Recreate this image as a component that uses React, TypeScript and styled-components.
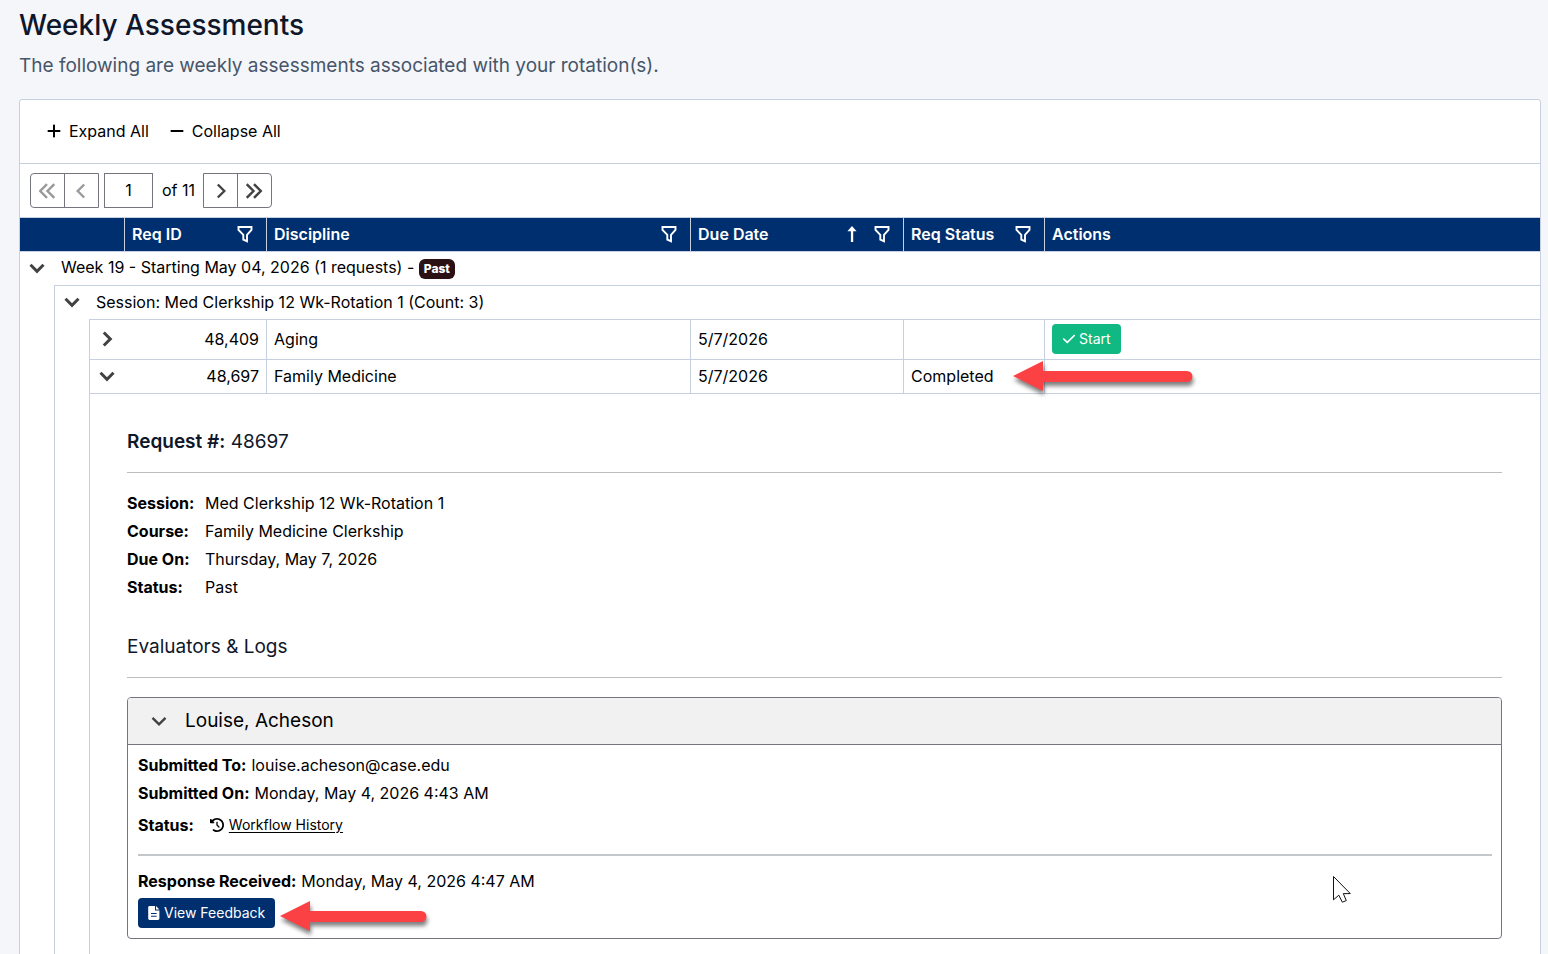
import React from 'react';
import styled, { createGlobalStyle, css } from 'styled-components';
import { FaCheck, FaClockRotateLeft, FaPlus, FaMinus } from 'react-icons/fa6';

const Global = createGlobalStyle`
  *, *::before, *::after { box-sizing: border-box; }
  html { scrollbar-width: none; }
  body {
    margin: 0;
    background: #f4f6fa;
    color: #000;
    font: 400 16px/24px Inter, "Liberation Sans", sans-serif;
  }
  button, input { font: inherit; color: inherit; }
`;

const ink = '#424242';
const line = '#c7d0de';

const Page = styled.main`
  position: relative;
  min-height: 100vh;
  padding: 8px 7px 16px 19px;
  overflow: hidden;
`;
const Title = styled.h1`
  margin: 0;
  font-size: 28px;
  line-height: 34px;
  font-weight: 500;
  color: #0f172a;
`;
const Subtitle = styled.p`
  margin: 10px 0 20px;
  font-size: 19px;
  line-height: 27px;
  color: #475569;
`;
const Panel = styled.section`
  background: #fff;
  border: 1px solid ${line};
  border-radius: 3px;
`;
const Toolbar = styled.div`
  display: flex;
  align-items: center;
  gap: 20px;
  height: 64px;
  padding: 0 26px 2px;
  border-bottom: 1px solid ${line};
`;
const PlainButton = styled.button`
  display: inline-flex;
  align-items: center;
  gap: 7px;
  padding: 0;
  border: 0;
  background: none;
  cursor: pointer;
`;
const Pager = styled.nav`
  display: flex;
  align-items: center;
  height: 54px;
  padding: 0 10px;
  border-bottom: 1px solid ${line};
`;
const PagerGroup = styled.div<{ $side: 'left' | 'right' }>`
  display: flex;
  border: 1px solid #75757f;
  border-radius: ${p => (p.$side === 'left' ? '4px 0 0 4px' : '0 4px 4px 0')};
`;
const PagerButton = styled.button`
  display: grid;
  place-items: center;
  width: 33px;
  height: 33px;
  padding: 0;
  border: 0;
  background: none;
  color: ${ink};
  & + & { width: 34px; border-left: 1px solid #75757f; }
  &:disabled { color: #9a9a9a; }
`;
const PageInput = styled.input`
  width: 49px;
  height: 35px;
  margin: 0 9px 0 5px;
  padding: 0 0 2px;
  border: 1px solid #75757f;
  border-radius: 0;
  background: #fff;
  text-align: center;
`;
const PageCount = styled.span`
  margin-right: 8px;
  padding-bottom: 2px;
`;

const Grid = styled.table`
  width: 100%;
  table-layout: fixed;
  border-collapse: separate;
  border-spacing: 0;
`;
const HeadCell = styled.th`
  height: 34px;
  padding: 0 13px 2px 7px;
  background: #002f6f;
  color: #fff;
  font-weight: 600;
  text-align: left;
  border-bottom: 1px solid ${line};
  & + & { border-left: 1px solid ${line}; }
`;
const HeadInner = styled.div`
  display: flex;
  align-items: center;
  gap: 17px;
`;
const HeadLabel = styled.span`
  flex: 1;
`;
const IconButton = styled.button`
  display: grid;
  place-items: center;
  padding: 0;
  border: 0;
  background: none;
  color: inherit;
  cursor: pointer;
`;
const DarkIconButton = styled(IconButton)`
  color: ${ink};
`;
const Cell = styled.td<{ $h?: number; $left?: boolean; $top?: boolean; $right?: boolean }>`
  position: relative;
  height: ${p => p.$h ?? 34}px;
  padding: 0 7px 2px;
  text-align: ${p => (p.$right ? 'right' : 'left')};
  ${p => p.$left && css`border-left: 1px solid ${line};`}
  ${p => p.$top && css`border-top: 1px solid ${line};`}
`;
const WeekCell = styled(Cell)`
  padding-bottom: 4px;
`;
const ToggleCell = styled(Cell)`
  padding: 0 0 2px 9px;
`;
const Badge = styled.span`
  display: inline-block;
  padding: 0 5px;
  border-radius: 6px;
  background: #2b1113;
  color: #fff;
  font-size: 12px;
  line-height: 20px;
  font-weight: 800;
`;
const ActionButton = styled.button<{ $tone: 'go' | 'primary' }>`
  display: inline-flex;
  align-items: center;
  gap: 3px;
  height: 30px;
  padding: 0 10px;
  border: 0;
  border-radius: 4px;
  background: ${p => (p.$tone === 'go' ? '#10b981' : '#002f6f')};
  color: #fff;
  font-size: 14px;
  line-height: 20px;
  vertical-align: middle;
  cursor: pointer;
`;
const DetailCell = styled.td`
  padding: 33px 38px 38px 37px;
  border-left: 1px solid ${line};
  border-top: 1px solid ${line};
`;
const Heading = styled.h2`
  margin: 0;
  padding-bottom: 15px;
  border-bottom: 1px solid #bdbdbd;
  font-size: 19px;
  line-height: 30px;
  font-weight: 400;
  color: #0f172a;
  b { font-weight: 600; }
`;
const Facts = styled.dl`
  display: grid;
  grid-template-columns: 78px 1fr;
  grid-auto-rows: 28px;
  align-items: center;
  margin: 16px 0 31px;
  dt { font-weight: 700; }
  dd { margin: 0; }
`;
const Card = styled.article`
  margin-top: 19px;
  border: 1px solid #75757f;
  border-radius: 4px;
  overflow: hidden;
`;
const CardHead = styled.header`
  display: flex;
  align-items: center;
  gap: 18px;
  height: 47px;
  padding: 0 23px;
  background: #f1f1f1;
  border-bottom: 1px solid #75757f;
  font-size: 19px;
`;
const CardBody = styled.div`
  padding: 6px 9px 10px 10px;
`;
const InfoLine = styled.div<{ $tall?: boolean }>`
  display: flex;
  align-items: center;
  height: ${p => (p.$tall ? 36 : 28)}px;
  b { margin-right: 5px; font-weight: 700; }
`;
const HistoryLink = styled.a`
  display: inline-flex;
  align-items: center;
  gap: 5px;
  margin-left: 11px;
  color: #000;
  font-size: 14px;
  text-decoration: none;
  span { text-decoration: underline; text-underline-offset: 2px; }
`;
const Rule = styled.hr`
  margin: 11px 0;
  border: 0;
  height: 2px;
  background: #c3c8cd;
`;
const ButtonRow = styled.div`
  display: flex;
  position: relative;
  padding-top: 3px;
`;
const Callout = styled.svg<{ $left: number; $top: number }>`
  position: absolute;
  left: ${p => p.$left}px;
  top: ${p => p.$top}px;
  z-index: 2;
  overflow: visible;
  pointer-events: none;
  filter: drop-shadow(1px 4px 2px rgba(0, 0, 0, 0.5));
`;
const Pointer = styled.svg`
  position: absolute;
  left: 1333px;
  top: 876px;
`;

const Chevron = ({ dir, weight = 3 }: { dir: 'down' | 'right' | 'left'; weight?: number }) => (
  <svg width="16" height="16" viewBox="0 0 16 16" fill="none" stroke="currentColor" strokeWidth={weight} aria-hidden="true">
    <path d={dir === 'down' ? 'M1.5 4.8 8 11.3l6.5-6.5' : dir === 'right' ? 'M4.8 1.5 11.3 8l-6.5 6.5' : 'M10.2 1.5 3.7 8l6.5 6.5'} />
  </svg>
);
const DoubleChevron = ({ dir }: { dir: 'left' | 'right' }) => (
  <svg width="18" height="16" viewBox="0 0 18 16" fill="none" stroke="currentColor" strokeWidth="2.4" aria-hidden="true">
    <path d={dir === 'left' ? 'M8 1.2 1.2 8 8 14.8M15.3 1.2 8.5 8l6.8 6.8' : 'M.7 1.2 7.500 8 .7 14.8M8 1.2 14.8 8 8 14.8'} />
  </svg>
);
const Funnel = () => (
  <svg width="16" height="18" viewBox="0 0 16 18" fill="none" stroke="currentColor" strokeWidth="1.9" aria-hidden="true">
    <path d="M1.5 2h13v2.8L10 9.8v6.4L6.3 14.6V9.8L1.5 4.8z" />
  </svg>
);
const SortArrow = () => (
  <svg width="10" height="18" viewBox="0 0 10 18" aria-hidden="true">
    <path d="M5 1l4.6 5.2H6.2V17H3.9V6.2H.4z" fill="currentColor" />
  </svg>
);
const FileIcon = () => (
  <svg width="13" height="16" viewBox="0 0 13 16" aria-hidden="true">
    <path d="M1.6 1H7v4.4h4.4v8.2c0 .8-.6 1.4-1.4 1.4H1.6C.8 15 .2 14.4.2 13.6V2.4C.2 1.6.8 1 1.6 1zM8 1l3.4 3.4H8zM3 8v1h5.6V8zm0 2.8v1h5.6v-1z" fill="currentColor" fillRule="evenodd" />
  </svg>
);
const RedArrow = ({ length, left, top }: { length: number; left: number; top: number }) => (
  <Callout $left={left} $top={top} width={length} height="30" aria-hidden="true">
    <path d={`M0 15 30 0v10H${length - 5}a5 5 0 0 1 0 11H30v9z`} fill="#fc4144" />
  </Callout>
);
const Toggle = ({ open, label }: { open: boolean; label: string }) => (
  <DarkIconButton type="button" aria-expanded={open} aria-label={label}>
    <Chevron dir={open ? 'down' : 'right'} />
  </DarkIconButton>
);

const columns = [
  { label: 'Req ID', filter: true },
  { label: 'Discipline', filter: true },
  { label: 'Due Date', filter: true, sorted: true },
  { label: 'Req Status', filter: true },
  { label: 'Actions' },
];
const widths = [34, 35, 35, 142, 424, 213, 141];
const facts = [
  ['Session:', 'Med Clerkship 12 Wk-Rotation 1'],
  ['Course:', 'Family Medicine Clerkship'],
  ['Due On:', 'Thursday, May 7, 2026'],
  ['Status:', 'Past'],
];

export default function App() {
  return (
    <>
      <Global />
      <Page>
        <Title>Weekly Assessments</Title>
        <Subtitle>The following are weekly assessments associated with your rotation(s).</Subtitle>
        <Panel>
          <Toolbar>
            <PlainButton type="button"><FaPlus size={16} />Expand All</PlainButton>
            <PlainButton type="button"><FaMinus size={16} />Collapse All</PlainButton>
          </Toolbar>
          <Pager aria-label="Pages">
            <PagerGroup $side="left">
              <PagerButton type="button" disabled aria-label="First page"><DoubleChevron dir="left" /></PagerButton>
              <PagerButton type="button" disabled aria-label="Previous page"><Chevron dir="left" weight={2.4} /></PagerButton>
            </PagerGroup>
            <PageInput aria-label="Page number" defaultValue="1" />
            <PageCount>of 11</PageCount>
            <PagerGroup $side="right">
              <PagerButton type="button" aria-label="Next page"><Chevron dir="right" weight={2.4} /></PagerButton>
              <PagerButton type="button" aria-label="Last page"><DoubleChevron dir="right" /></PagerButton>
            </PagerGroup>
          </Pager>
          <Grid>
            <colgroup>
              {widths.map((w, i) => <col key={i} width={w} />)}
              <col />
            </colgroup>
            <thead>
              <tr>
                <HeadCell colSpan={3} />
                {columns.map(c => (
                  <HeadCell key={c.label} scope="col">
                    <HeadInner>
                      <HeadLabel>{c.label}</HeadLabel>
                      {c.sorted && <SortArrow />}
                      {c.filter && <IconButton type="button" aria-label={`Filter ${c.label}`}><Funnel /></IconButton>}
                    </HeadInner>
                  </HeadCell>
                ))}
              </tr>
            </thead>
            <tbody>
              <tr>
                <ToggleCell $h={33}><Toggle open label="Toggle week" /></ToggleCell>
                <WeekCell $h={33} colSpan={7}>
                  Week 19 - Starting May 04, 2026 (1 requests) - <Badge>Past</Badge>
                </WeekCell>
              </tr>
              <tr>
                <Cell rowSpan={4} />
                <ToggleCell $left $top><Toggle open label="Toggle session" /></ToggleCell>
                <Cell $top colSpan={6}>Session: Med Clerkship 12 Wk-Rotation 1 (Count: 3)</Cell>
              </tr>
              <tr>
                <Cell $left rowSpan={3} />
                <ToggleCell $h={40} $left $top><Toggle open={false} label="Toggle request 48409" /></ToggleCell>
                <Cell $top $right>48,409</Cell>
                <Cell $left $top>Aging</Cell>
                <Cell $left $top>5/7/2026</Cell>
                <Cell $left $top />
                <Cell $left $top><ActionButton type="button" $tone="go"><FaCheck size={14} />Start</ActionButton></Cell>
              </tr>
              <tr>
                <ToggleCell $left $top><Toggle open label="Toggle request 48697" /></ToggleCell>
                <Cell $top $right>48,697</Cell>
                <Cell $left $top>Family Medicine</Cell>
                <Cell $left $top>5/7/2026</Cell>
                <Cell $left $top>
                  Completed
                  <RedArrow length={179} left={109} top={1} />
                </Cell>
                <Cell $left $top />
              </tr>
              <tr>
                <DetailCell colSpan={6}>
                  <Heading><b>Request #:</b> 48697</Heading>
                  <Facts>
                    {facts.map(([k, v]) => (
                      <React.Fragment key={k}><dt>{k}</dt><dd>{v}</dd></React.Fragment>
                    ))}
                  </Facts>
                  <Heading>Evaluators &amp; Logs</Heading>
                  <Card>
                    <CardHead>
                      <DarkIconButton type="button" aria-expanded aria-label="Toggle evaluator">
                        <Chevron dir="down" weight={2.4} />
                      </DarkIconButton>
                      Louise, Acheson
                    </CardHead>
                    <CardBody>
                      <InfoLine><b>Submitted To:</b>louise.acheson@case.edu</InfoLine>
                      <InfoLine><b>Submitted On:</b>Monday, May 4, 2026 4:43 AM</InfoLine>
                      <InfoLine $tall>
                        <b>Status:</b>
                        <HistoryLink href="#history"><FaClockRotateLeft size={14} /><span>Workflow History</span></HistoryLink>
                      </InfoLine>
                      <Rule />
                      <InfoLine><b>Response Received:</b>Monday, May 4, 2026 4:47 AM</InfoLine>
                      <ButtonRow>
                        <ActionButton type="button" $tone="primary"><FileIcon />View Feedback</ActionButton>
                        <RedArrow length={146} left={142} top={6} />
                      </ButtonRow>
                    </CardBody>
                  </Card>
                </DetailCell>
              </tr>
            </tbody>
          </Grid>
        </Panel>
        <Pointer width="19" height="28" viewBox="0 0 19 28" aria-hidden="true">
          <path d="M.5.5v23.3l5.3-4.6 3.5 7 4-1.6-3-7h7z" fill="#fff" stroke="#111" />
        </Pointer>
      </Page>
    </>
  );
}
